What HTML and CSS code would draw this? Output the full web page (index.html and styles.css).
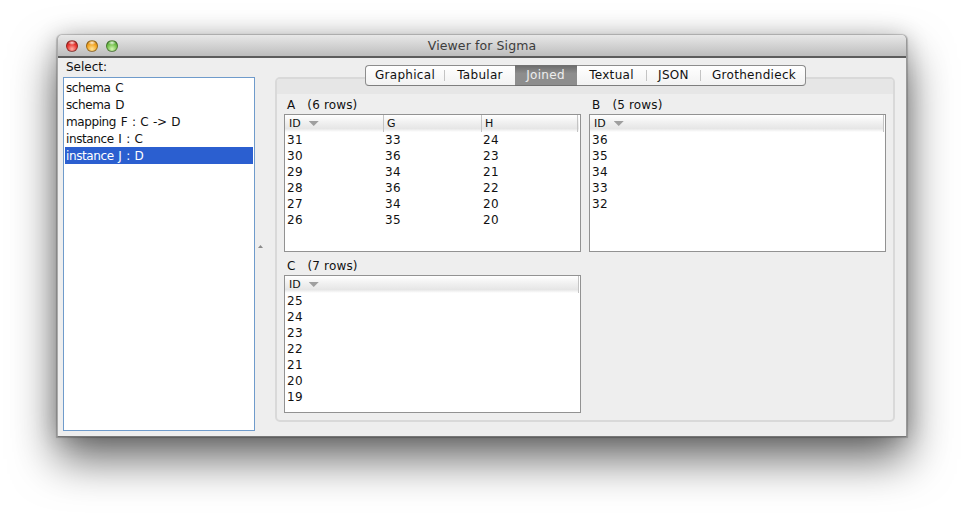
FILE: index.html
```html
<!DOCTYPE html>
<html lang="en">
<head>
<meta charset="utf-8">
<title>Viewer for Sigma</title>
<link rel="stylesheet" href="styles.css">
</head>
<body>
<div class="window">
  <header class="titlebar">
    <div class="lights"><span class="light red"></span><span class="light amber"></span><span class="light green"></span></div>
    <div class="title">Viewer for Sigma</div>
  </header>
  <main class="content">
    <section class="side">
      <div class="select-label">Select:</div>
      <ul class="list">
        <li>schema C</li>
        <li>schema D</li>
        <li>mapping F : C -&gt; D</li>
        <li>instance I : C</li>
        <li class="selected">instance J : D</li>
      </ul>
    </section>
    <div class="divider"><span class="grip"></span></div>
    <section class="tabarea">
      <nav class="tabs">
        <span class="tab t1">Graphical</span>
        <span class="tab t2">Tabular</span>
        <span class="tab t3 active">Joined</span>
        <span class="tab t4">Textual</span>
        <span class="tab t5">JSON</span>
        <span class="tab t6">Grothendieck</span>
      </nav>
      <div class="panel">
        <div class="band"></div>
        <div class="grid">
          <div class="cell">
            <div class="caption"><span>A</span><span>(6 rows)</span></div>
            <div class="table">
              <div class="thead">
                <div class="th"><span>ID</span><i class="sort"></i></div><div class="th"><span>G</span></div><div class="th"><span>H</span></div>
              </div>
              <div class="row"><span>31</span><span>33</span><span>24</span></div>
              <div class="row"><span>30</span><span>36</span><span>23</span></div>
              <div class="row"><span>29</span><span>34</span><span>21</span></div>
              <div class="row"><span>28</span><span>36</span><span>22</span></div>
              <div class="row"><span>27</span><span>34</span><span>20</span></div>
              <div class="row"><span>26</span><span>35</span><span>20</span></div>
            </div>
          </div>
          <div class="cell">
            <div class="caption"><span>B</span><span>(5 rows)</span></div>
            <div class="table">
              <div class="thead single"><div class="th"><span>ID</span><i class="sort"></i></div></div>
              <div class="row"><span>36</span></div>
              <div class="row"><span>35</span></div>
              <div class="row"><span>34</span></div>
              <div class="row"><span>33</span></div>
              <div class="row"><span>32</span></div>
            </div>
          </div>
          <div class="cell">
            <div class="caption"><span>C</span><span>(7 rows)</span></div>
            <div class="table">
              <div class="thead single"><div class="th"><span>ID</span><i class="sort"></i></div></div>
              <div class="row"><span>25</span></div>
              <div class="row"><span>24</span></div>
              <div class="row"><span>23</span></div>
              <div class="row"><span>22</span></div>
              <div class="row"><span>21</span></div>
              <div class="row"><span>20</span></div>
              <div class="row"><span>19</span></div>
            </div>
          </div>
        </div>
      </div>
    </section>
  </main>
</div>
</body>
</html>
```

FILE: styles.css
```css
* { box-sizing: border-box; }
html, body { margin: 0; height: 516px; overflow: hidden; background: #fff; }
body {
  padding: 35px 57px 0;
  font-family: "DejaVu Sans", "Liberation Sans", sans-serif;
  font-size: 12px;
  color: #111;
}
.window {
  width: 850px;
  height: 402px;
  display: flex;
  flex-direction: column;
  background: #eeeeee;
  border-radius: 5px 5px 0 0;
  box-shadow: 0 22px 45px rgba(0, 0, 0, .6), 0 0 22px rgba(0, 0, 0, .18), 0 0 1px 1px rgba(0, 0, 0, .2);
  border-bottom: 1px solid #777;
  border-right: 1px solid #999;
  border-left: 1px solid #aaa;
}
.titlebar {
  flex: 0 0 23px;
  position: relative;
  display: flex;
  align-items: center;
  justify-content: center;
  background: linear-gradient(#e8e8e8, #bdbdbd);
  border-bottom: 2px solid #5c5c5c;
  border-radius: 5px 5px 0 0;
}
.lights { position: absolute; left: 8px; top: 5px; display: flex; gap: 8px; }
.light { width: 12px; height: 12px; border-radius: 50%; border: 1px solid rgba(0, 0, 0, .35); }
.red { background: radial-gradient(ellipse 40% 22% at 50% 18%, rgba(255,255,255,.85), transparent), radial-gradient(circle at 50% 80%, #ffb0a8, #e8342e 55%, #a81c18); }
.amber { background: radial-gradient(ellipse 40% 22% at 50% 18%, rgba(255,255,255,.85), transparent), radial-gradient(circle at 50% 80%, #ffe59a, #f3a421 55%, #b9760e); }
.green { background: radial-gradient(ellipse 40% 22% at 50% 18%, rgba(255,255,255,.85), transparent), radial-gradient(circle at 50% 80%, #d6f7b4, #72c04a 55%, #3f8a26); }
.title { font-size: 12.5px; color: #3d3d3d; letter-spacing: .1px; }
.content { flex: 1; display: flex; min-height: 0; padding: 0 11px 5px 5px; }
.side { width: 192px; display: flex; flex-direction: column; }
.select-label { height: 19px; padding: 2px 0 0 3px; line-height: 15px; }
.list {
  list-style: none;
  margin: 0;
  padding: 1px 1px;
  flex: 1;
  background: #fff;
  border: 1px solid #6f9bcb;
  letter-spacing: -.4px;
  word-spacing: 1.3px;
}
.list li { height: 17px; line-height: 18px; padding-left: 1px; }
.list .selected { background: #2b5fd0; color: #fff; }
.divider { width: 20px; position: relative; }
.grip {
  position: absolute;
  left: 3px;
  top: 187px;
  width: 5px;
  height: 3px;
  background: #8a8a8a;
  clip-path: polygon(50% 0, 100% 100%, 0 100%);
}
.tabarea { flex: 1; display: flex; flex-direction: column; padding-top: 7px; padding-bottom: 9px; }
.tabs {
  display: flex;
  justify-content: center;
  height: 21px;
  margin-bottom: -9px;
  position: relative;
  z-index: 1;
  letter-spacing: .3px;
}
.tab {
  height: 21px;
  line-height: 19px;
  text-align: center;
  background: linear-gradient(#ffffff, #f2f2f2);
  border-top: 1px solid #8d8d8d;
  border-bottom: 1px solid #7e7e7e;
  position: relative;
}
.t1 { width: 80px; border-left: 1px solid #8d8d8d; border-radius: 4px 0 0 4px; }
.t2 { width: 70px; padding-left: 1px; }
.t3 { width: 62px; }
.t4 { width: 70px; }
.t5 { width: 54px; }
.t6 { width: 105px; padding-left: 3px; border-right: 1px solid #8d8d8d; border-radius: 0 4px 4px 0; }
.t1::after, .t4::after, .t5::after {
  content: "";
  position: absolute;
  right: 0;
  top: 4px;
  height: 11px;
  border-right: 1px solid #c4c4c4;
}
.active {
  color: #eee;
  background: linear-gradient(#6e6e6e, #8d8d8d 40%, #8d8d8d);
  border-color: #707070;
}
.panel {
  flex: 1;
  background: #eeeeee;
  border: 2px solid #d9d9d9;
  border-radius: 5px;
  display: flex;
  flex-direction: column;
  min-height: 0;
}
.band { flex: 0 0 15px; background: #e6e6e6; border-radius: 3px 3px 0 0; }
.grid {
  display: grid;
  grid-template-columns: 297px 297px;
  grid-auto-rows: 155px;
  column-gap: 8px;
  row-gap: 6px;
  padding: 3px 0 0 7px;
}
.cell { display: flex; flex-direction: column; }
.caption { height: 17px; line-height: 17px; padding-left: 3px; display: flex; gap: 12px; letter-spacing: .15px; }
.table { height: 138px; background: #fff; border: 1px solid #929292; }
.thead {
  display: grid;
  grid-template-columns: 99px 98px 96px;
  height: 17px;
  background: linear-gradient(#ffffff, #f0f0f0 45%, #e6e6e6 80%, #ffffff);
  margin-right: 1px;
}
.thead.single { grid-template-columns: 1fr; }
.th {
  font-size: 11px;
  line-height: 16px;
  padding-left: 3px;
  border-right: 1px solid #c4c4c4;
  display: flex;
  align-items: center;
  gap: 8px;
}
.th:first-child { padding-left: 4px; }
.sort {
  width: 10px;
  height: 5px;
  background: #9f9f9f;
  clip-path: polygon(0 0, 100% 0, 50% 100%);
}
.row {
  display: grid;
  grid-template-columns: 98px 98px 97px;
  height: 16px;
  line-height: 16px;
  padding-left: 2px;
  letter-spacing: .4px;
}
```
